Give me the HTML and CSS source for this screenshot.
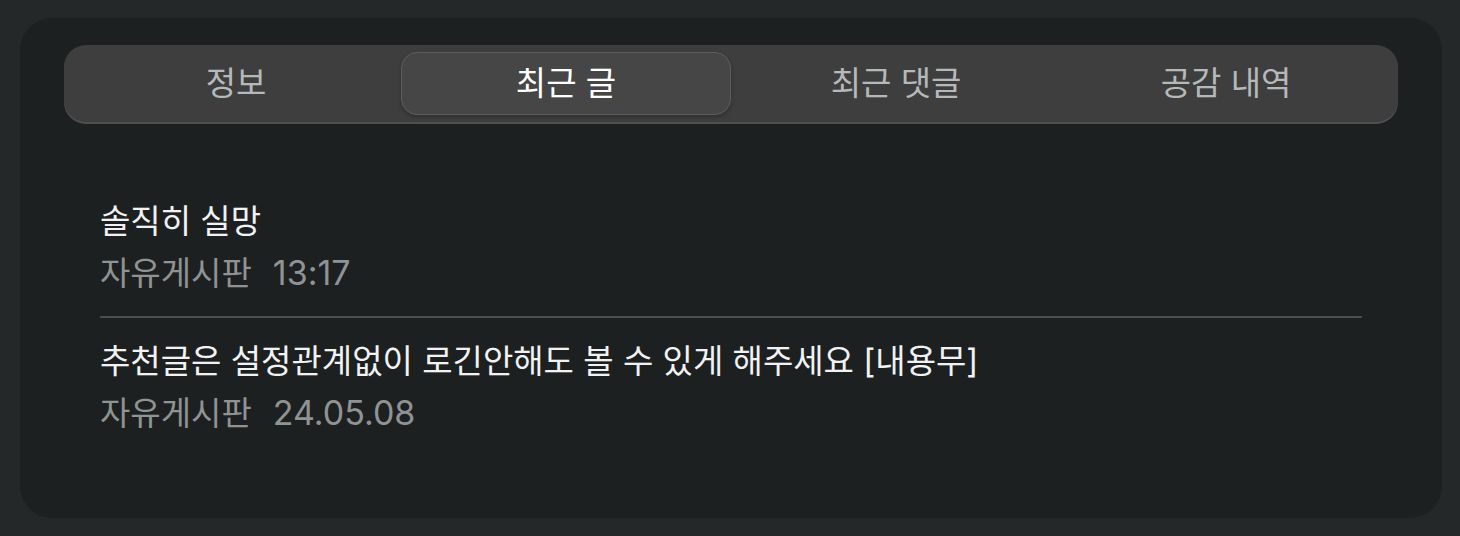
FILE: index.html
```html
<!DOCTYPE html>
<html lang="ko">
<head>
<meta charset="utf-8">
<title>최근 글</title>
<link rel="stylesheet" href="styles.css">
</head>
<body>
  <section class="card">
    <nav class="tabs">
      <button class="tab">정보</button>
      <button class="tab tab-active">최근 글</button>
      <button class="tab">최근 댓글</button>
      <button class="tab">공감 내역</button>
    </nav>
    <ul class="posts">
      <li class="post">
        <div class="post-title">솔직히 실망</div>
        <div class="post-meta"><span class="board">자유게시판</span><span class="date">13:17</span></div>
      </li>
      <li class="post">
        <div class="post-title">추천글은 설정관계없이 로긴안해도 볼 수 있게 해주세요 [내용무]</div>
        <div class="post-meta"><span class="board">자유게시판</span><span class="date">24.05.08</span></div>
      </li>
    </ul>
  </section>
</body>
</html>
```

FILE: styles.css
```css
* {
  box-sizing: border-box;
}

html, body {
  margin: 0;
  padding: 0;
}

body {
  background: #252829;
  font-family: "Inter", "Noto Sans CJK KR", sans-serif;
  padding: 18px 18px 0 20px;
}

.card {
  background: #1d2021;
  border-radius: 32px;
  height: 500px;
  padding: 27px 44px 0;
}

.tabs {
  display: grid;
  grid-template-columns: repeat(4, 1fr);
  padding: 7px;
  background: #3e3e3e;
  border-radius: 22px;
  box-shadow: 0 2px 0 #4b5050;
  height: 77px;
}

.tab {
  font-family: inherit;
  font-size: 33px;
  color: #b5b9b9;
  background: transparent;
  border: 1px solid transparent;
  border-radius: 16px;
  padding: 0;
  height: 63px;
  line-height: 1;
}

.tab-active {
  background: #464646;
  border-color: #5c5e5e;
  color: #ffffff;
  box-shadow: 0 2px 4px rgba(0, 0, 0, 0.25);
}

.posts {
  list-style: none;
  margin: 56px 0 0;
  padding: 0 36px;
}

.post {
  padding: 22px 0;
}

.post + .post {
  border-top: 2px solid #4a4e4e;
}

.post-title {
  font-size: 33px;
  line-height: 42px;
  color: #f2f2f2;
}

.post-meta {
  margin-top: 10px;
  font-size: 33px;
  line-height: 42px;
  color: #8f9393;
}

.board {
  margin-right: 21px;
}

.date {
  font-size: 34px;
}
```
